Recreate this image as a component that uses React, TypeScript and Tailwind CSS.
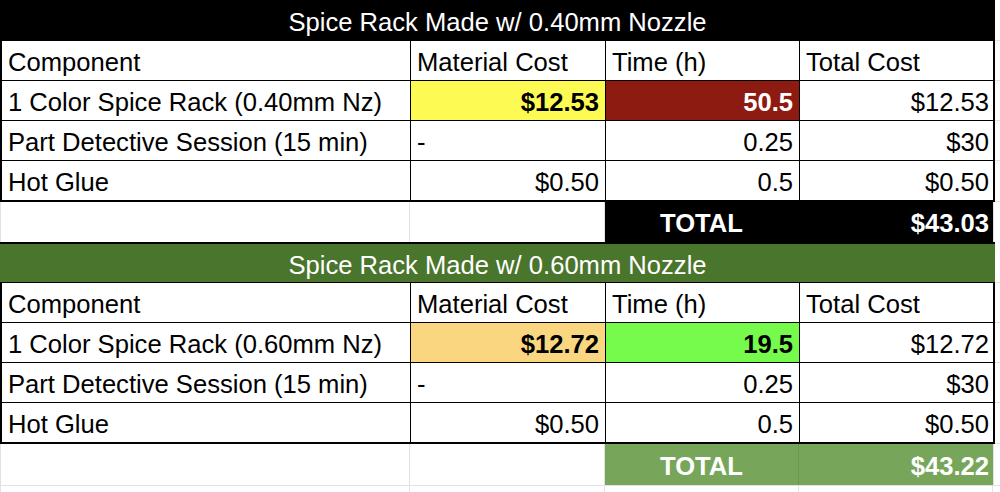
const rows1 = [
  { name: "1 Color Spice Rack (0.40mm Nz)", mat: "$12.53", time: "50.5", total: "$12.53", matBg: "bg-[#fdfa53]", timeBg: "bg-[#8e1b11]", timeText: "text-white", hot: true },
  { name: "Part Detective Session (15 min)", mat: "-", time: "0.25", total: "$30" },
  { name: "Hot Glue", mat: "$0.50", time: "0.5", total: "$0.50" },
];

const rows2 = [
  { name: "1 Color Spice Rack (0.60mm Nz)", mat: "$12.72", time: "19.5", total: "$12.72", matBg: "bg-[#fad680]", timeBg: "bg-[#76fa4c]", timeText: "text-black", hot: true },
  { name: "Part Detective Session (15 min)", mat: "-", time: "0.25", total: "$30" },
  { name: "Hot Glue", mat: "$0.50", time: "0.5", total: "$0.50" },
];

type Row = {
  name: string;
  mat: string;
  time: string;
  total: string;
  matBg?: string;
  timeBg?: string;
  timeText?: string;
  hot?: boolean;
};

function CostTable({ title, titleBg, rows, totalBg, totalSplit, total, first }: {
  title: string;
  titleBg: string;
  rows: Row[];
  totalBg: string;
  totalSplit: string;
  total: string;
  first?: boolean;
}) {
  return (
    <div>
      {/* title bar */}
      <div className="flex">
        <div
          className={`w-[995px] ${first ? "h-[41px]" : "h-[41px] border-t-2"} pt-[5px] border-b border-black ${titleBg} flex items-center justify-center text-white`}
        >
          {title}
        </div>
        <div className="flex-1 border-b border-[#e2e2e2]" />
      </div>

      {/* column headers */}
      <div className="flex h-[40px]">
        <div className="w-[995px] flex border-x-2 border-b border-black pt-[4px]">
          <div className="w-[409px] border-r border-black -mt-[4px] pt-[4px] px-[6px] flex items-center">Component</div>
          <div className="w-[195px] border-r border-black -mt-[4px] pt-[4px] px-[6px] flex items-center">Material Cost</div>
          <div className="w-[194px] border-r border-black -mt-[4px] pt-[4px] px-[6px] flex items-center">Time (h)</div>
          <div className="flex-1 px-[6px] -mt-[4px] pt-[4px] flex items-center">Total Cost</div>
        </div>
        <div className="flex-1 border-b border-[#e2e2e2]" />
      </div>

      {rows.map((r, i) => (
        <div key={i} className={`flex ${i === rows.length - 1 ? "h-[41px]" : "h-[40px]"}`}>
          <div className={`w-[995px] flex border-x-2 border-black ${i === rows.length - 1 ? "border-b-2" : "border-b"}`}>
            <div className="w-[409px] border-r border-black pt-[4px] px-[6px] flex items-center whitespace-nowrap">{r.name}</div>
            <div
              className={`w-[195px] border-r border-black pt-[4px] px-[6px] flex items-center ${r.mat === "-" ? "justify-start" : "justify-end"} ${r.matBg ?? ""} ${r.hot ? "font-bold" : ""}`}
            >
              {r.mat}
            </div>
            <div
              className={`w-[194px] border-r border-black pt-[4px] px-[6px] flex items-center justify-end ${r.timeBg ?? ""} ${r.timeText ?? ""} ${r.hot ? "font-bold" : ""}`}
            >
              {r.time}
            </div>
            <div className="flex-1 pt-[4px] px-[4px] flex items-center justify-end">{r.total}</div>
          </div>
          <div className="flex-1 border-b border-[#e2e2e2]" />
        </div>
      ))}

      {/* total row */}
      <div className={`flex ${first ? "h-[40px]" : "h-[42px] border-b border-[#e2e2e2]"}`}>
        <div className="w-[410px] border-l border-r border-[#e2e2e2]" />
        <div className="w-[195px] border-r border-[#e2e2e2]" />
        <div className={`w-[194px] ${totalBg} border-r ${totalSplit} pt-[4px] flex items-center justify-center font-bold text-white`}>
          TOTAL
        </div>
        <div className={`w-[194px] ${totalBg} pt-[4px] px-[4px] flex items-center justify-end font-bold text-white`}>
          {total}
        </div>
        <div className="flex-1 border-l border-[#e2e2e2]" />
      </div>
    </div>
  );
}

export default function App() {
  return (
    <div
      className="w-[1000px] h-[492px] overflow-hidden bg-white text-black text-[25.6px] leading-none"
      style={{ fontFamily: '"Liberation Sans", Arial, sans-serif' }}
    >
      <CostTable
        first
        title="Spice Rack Made w/ 0.40mm Nozzle"
        titleBg="bg-black"
        rows={rows1}
        totalBg="bg-black"
        totalSplit="border-black"
        total="$43.03"
      />
      <CostTable
        title="Spice Rack Made w/ 0.60mm Nozzle"
        titleBg="bg-[#4a752c]"
        rows={rows2}
        totalBg="bg-[#77a65b]"
        totalSplit="border-[#6c9752]"
        total="$43.22"
      />
      <div className="flex h-[10px]">
        <div className="w-[410px] border-l border-r border-[#e2e2e2]" />
        <div className="w-[195px] border-r border-[#e2e2e2]" />
        <div className="w-[194px] border-r border-[#e2e2e2]" />
        <div className="w-[194px] border-r border-[#e2e2e2]" />
      </div>
    </div>
  );
}
